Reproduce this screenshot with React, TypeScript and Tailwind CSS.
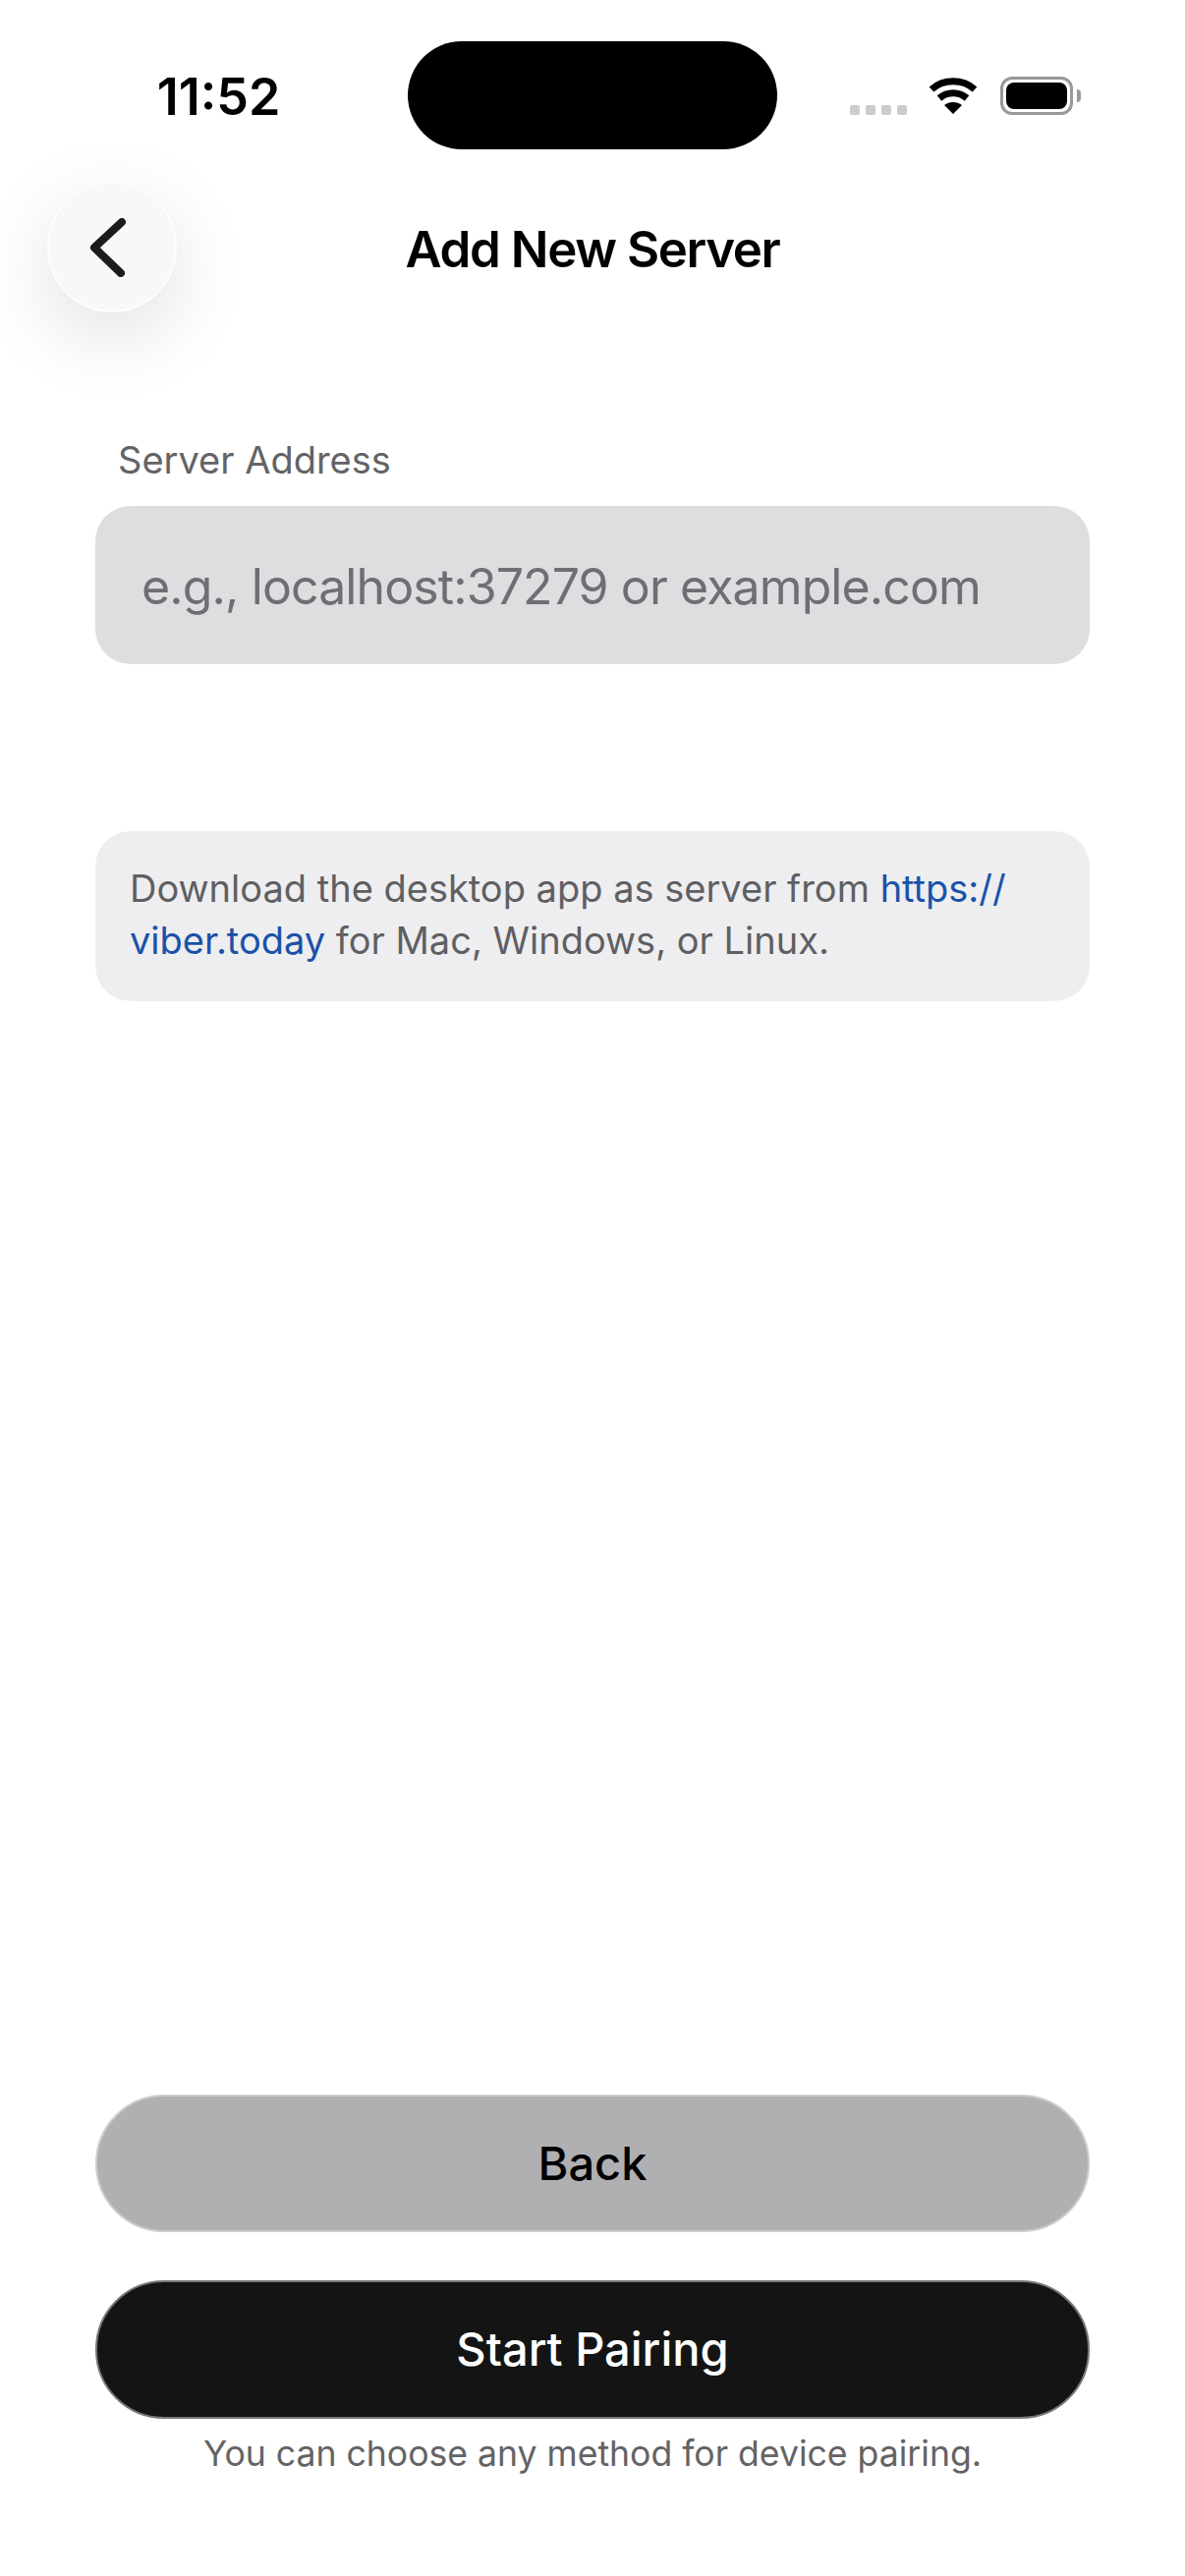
const font = "font-['Inter',sans-serif]"

function WifiIcon() {
  return (
    <svg width="50" height="37" viewBox="0 0 50 37" fill="none">
      <path d="M3 12C15 1 35 1 47 12" stroke="#000" strokeWidth="7" />
      <path d="M11 21C19 14 31 14 39 21" stroke="#000" strokeWidth="7" />
      <path d="M25 37L16 28C21 24 29 24 34 28Z" fill="#000" />
    </svg>
  )
}

function StatusBar() {
  return (
    <div className="flex h-[110px] items-center">
      <div className="flex w-[415px] justify-center pt-[3px] pl-[30px]">
        <span className="text-[52px] leading-none font-semibold text-black">11:52</span>
      </div>
      <div className="h-[110px] w-[376px] rounded-[55px] bg-black" />
      <div className="flex items-center pl-[74px]">
        <div className="flex gap-[6px] pt-[30px]">
          <div className="h-[10px] w-[10px] rounded-[2px] bg-[#cccccc]" />
          <div className="h-[10px] w-[10px] rounded-[2px] bg-[#cccccc]" />
          <div className="h-[10px] w-[10px] rounded-[2px] bg-[#cccccc]" />
          <div className="h-[10px] w-[10px] rounded-[2px] bg-[#cccccc]" />
        </div>
        <div className="ml-[22px]">
          <WifiIcon />
        </div>
        <div className="ml-[23px] h-[39px] w-[74px] rounded-[12px] border-[3px] border-[#999999] p-[3px]">
          <div className="h-full w-full rounded-[8px] bg-black" />
        </div>
        <div className="ml-[4px] h-[13px] w-[4px] rounded-r-full bg-[#999999]" />
      </div>
    </div>
  )
}

function Header() {
  return (
    <div className="relative mt-[33px] flex h-[133px] items-center justify-center">
      <button className="absolute top-0 left-[48px] flex h-[133px] w-[132px] items-center justify-center rounded-full border-2 border-[#fdfdfd] bg-[#f8f8f8] shadow-[0_24px_80px_rgba(0,0,0,0.12)]">
        <svg width="44" height="60" viewBox="0 0 44 60" fill="none" className="mr-[6px]">
          <path d="M35 4L7 30L34 56" stroke="#1c1c1e" strokeWidth="8" strokeLinecap="round" strokeLinejoin="round" />
        </svg>
      </button>
      <h1 className="pt-[3px] text-[51px] leading-none font-semibold tracking-[-1.4px] text-black">Add New Server</h1>
    </div>
  )
}

export default function App() {
  return (
    <div className={`flex h-[2622px] w-[1206px] flex-col overflow-hidden bg-white pt-[42px] ${font}`}>
      <StatusBar />
      <Header />

      <div className="mt-[127px] flex flex-1 flex-col px-[97px]">
        <label className="pl-[23px] text-[38px] leading-[46px] text-[#636366]">Server Address</label>
        <div className="mt-[24px] flex h-[161px] items-center rounded-[36px] bg-[#dedee0] pt-[3px] pl-[47px]">
          <span className="text-[50px] tracking-[-0.9px] text-[#6e6e73]">e.g., localhost:37279 or example.com</span>
        </div>

        <div className="mt-[170px] rounded-[36px] bg-[#eeeef0] px-[35px] pt-[32px] pb-[35px] text-[38px] leading-[53px] text-[#5f5f63]">
          Download the desktop app as server from <span className="text-[#1a52a8]">https://<wbr />viber.today</span> for Mac, Windows, or Linux.
        </div>

        <div className="flex-1" />

        <button className="h-[140px] rounded-[70px] border-2 border-[#cccccc] bg-[#b0b0b2] text-[47px] font-medium text-black">
          Back
        </button>
        <button className="mt-[49px] h-[141px] rounded-[70px] border-2 border-[#777777] bg-[#141414] text-[47px] font-medium text-white">
          Start Pairing
        </button>
        <p className="mt-[13px] mb-[101px] text-center text-[35.6px] leading-[46px] text-[#636366]">
          You can choose any method for device pairing.
        </p>
      </div>
    </div>
  )
}
